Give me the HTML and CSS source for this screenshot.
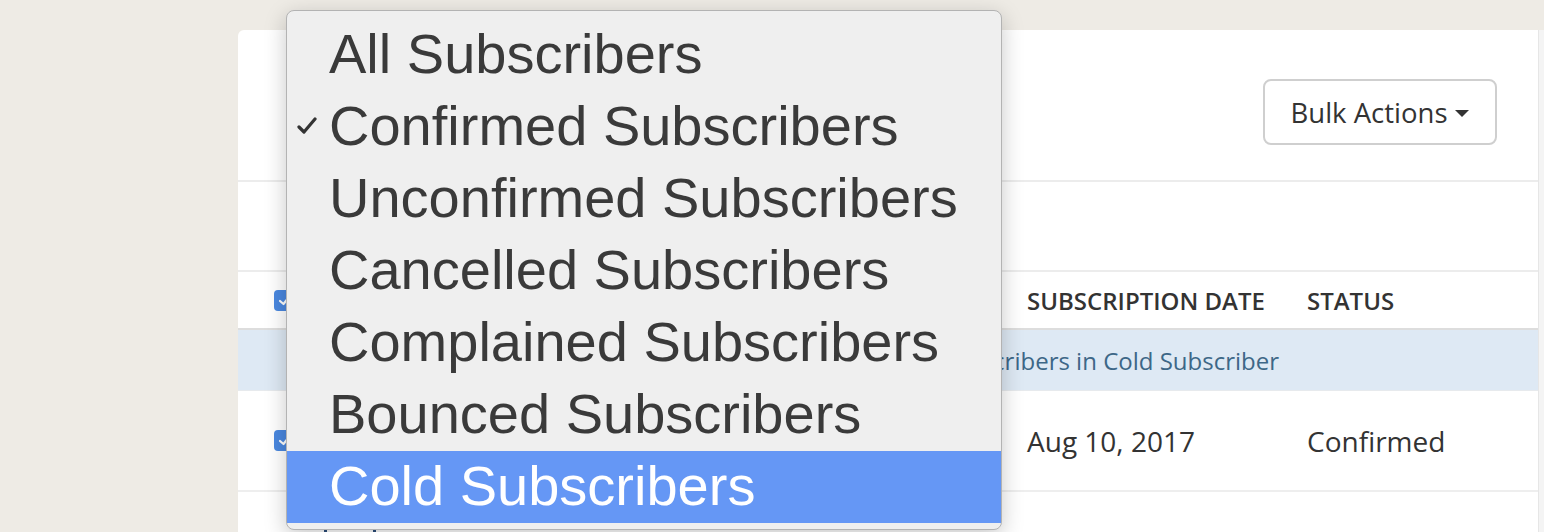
FILE: index.html
```html
<!DOCTYPE html>
<html lang="en">
<head>
    <meta charset="utf-8" />
    <title>Subscribers</title>
    <link rel="stylesheet" href="styles.css">
</head>
<body>
    <div class="page">
        <div class="card">
            <div class="card-header">
                <button class="bulk-btn">Bulk Actions <span class="caret"></span></button>
            </div>

            <div class="card-filters"></div>

            <div class="table">
                <div class="row head">
                    <div class="cell"><span class="checkbox"><svg width="21" height="21" viewBox="0 0 21 21"><polyline points="6,11 9.5,14 15,7" fill="none" stroke="#fff" stroke-width="2.2" stroke-linecap="round" stroke-linejoin="round"/></svg></span></div>
                    <div class="cell">Subscription Date</div>
                    <div class="cell">Status</div>
                </div>
                <div class="row notice">
                    <span>Select all 2 subscribers in Cold Subscriber</span>
                </div>
                <div class="row data">
                    <div class="cell"><span class="checkbox"><svg width="21" height="21" viewBox="0 0 21 21"><polyline points="6,11 9.5,14 15,7" fill="none" stroke="#fff" stroke-width="2.2" stroke-linecap="round" stroke-linejoin="round"/></svg></span></div>
                    <div class="cell">Aug 10, 2017</div>
                    <div class="cell">Confirmed</div>
                </div>
                <div class="row data next">
                    <div class="cell"><span class="avatar"></span></div>
                    <div class="cell"></div>
                    <div class="cell"></div>
                </div>
            </div>
        </div>
        <div class="scroll-strip"></div>
    </div>

    <ul class="menu">
        <li><span class="tick"></span>All Subscribers</li>
        <li><span class="tick">
            <svg width="20" height="18" viewBox="0 0 20 18"><polyline points="2,10 7,15 18,2" fill="none" stroke="#333" stroke-width="3.2" stroke-linecap="round" stroke-linejoin="round"/></svg>
        </span>Confirmed Subscribers</li>
        <li><span class="tick"></span>Unconfirmed Subscribers</li>
        <li><span class="tick"></span>Cancelled Subscribers</li>
        <li><span class="tick"></span>Complained Subscribers</li>
        <li><span class="tick"></span>Bounced Subscribers</li>
        <li class="active"><span class="tick"></span>Cold Subscribers</li>
    </ul>
</body>
</html>
```

FILE: styles.css
```css
* {
    margin: 0;
    padding: 0;
    box-sizing: border-box;
}

body {
    font-family: 'Open Sans', 'Liberation Sans', Arial, sans-serif;
    background: #eeebe5;
    color: #333;
    height: 532px;
    overflow: hidden;
}

.page {
    display: flex;
    padding: 30px 0 0 238px;
}

.card {
    width: 1300px;
    background: #ffffff;
    border-top-left-radius: 6px;
    min-height: 600px;
}

.scroll-strip {
    width: 6px;
    background: #f4f4f4;
    border-left: 1px solid #e6e6e6;
    min-height: 600px;
}

.card-header {
    display: flex;
    justify-content: flex-end;
    padding: 49px 41px 35px 0;
    border-bottom: 2px solid #ececec;
}

.bulk-btn {
    display: flex;
    align-items: center;
    gap: 8px;
    width: 234px;
    height: 66px;
    justify-content: center;
    background: #ffffff;
    border: 2px solid #cfcfcf;
    border-radius: 8px;
    font-family: 'Open Sans', sans-serif;
    font-size: 27.5px;
    color: #333;
}

.caret {
    width: 0;
    height: 0;
    border-left: 7px solid transparent;
    border-right: 7px solid transparent;
    border-top: 7px solid #333;
    margin-top: 2px;
}

.card-filters {
    height: 90px;
    border-bottom: 2px solid #ececec;
}

.row {
    display: grid;
    grid-template-columns: 752px 280px 1fr;
    padding-left: 36px;
    align-items: center;
}

.cell {
    display: flex;
    align-items: center;
}

.head {
    height: 58px;
    border-bottom: 2px solid #dddddd;
    font-size: 24px;
    font-weight: 600;
    text-transform: uppercase;
    color: #333;
}

.head .cell:nth-child(n+2),
.data .cell:nth-child(n+2) {
    margin-left: 1px;
}

.notice {
    display: flex;
    justify-content: flex-end;
    height: 61px;
    background: #dee9f4;
    border-bottom: 1px solid #e7eaed;
    font-size: 24px;
    color: #3d6787;
    padding: 0 259px 0 0;
}

.data {
    height: 101px;
    border-bottom: 2px solid #eeeeee;
    font-size: 28px;
    color: #333;
}

.checkbox {
    display: flex;
    width: 21px;
    height: 21px;
    border-radius: 4px;
    background: #4a88e0;
    flex-shrink: 0;
}

.avatar {
    width: 52px;
    height: 52px;
    border: 3px solid #2c4d7a;
    border-radius: 6px;
    margin: 26px 0 0 50px;
}

.next {
    align-items: start;
}

.menu {
    position: absolute;
    top: 10px;
    left: 286px;
    width: 716px;
    height: 520px;
    list-style: none;
    padding: 8px 0 6px;
    background: #efefef;
    border: 1px solid #b3b3b3;
    border-radius: 8px;
    box-shadow: 0 6px 22px rgba(0, 0, 0, 0.22);
    font-family: 'Liberation Sans', Arial, sans-serif;
    font-size: 56px;
    color: #3a3a3a;
}

.menu li {
    display: flex;
    align-items: center;
    height: 72px;
    padding: 0 0 3px 10px;
    white-space: nowrap;
}

.menu li.active {
    background: #6597f5;
    color: #ffffff;
}

.tick {
    display: flex;
    align-items: center;
    width: 32px;
    height: 69px;
}
```
